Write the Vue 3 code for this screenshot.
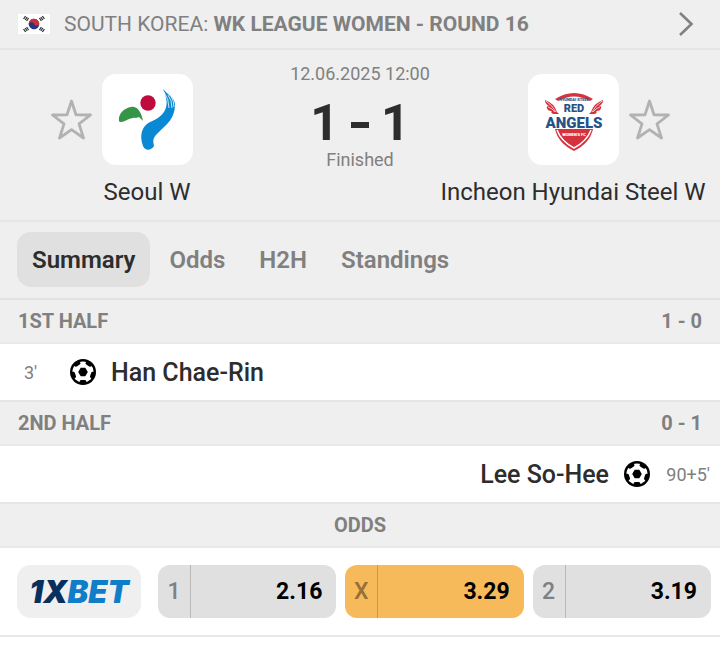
<script setup>
import { ref } from 'vue'

const tabs = ['Summary', 'Odds', 'H2H', 'Standings']
const activeTab = ref('Summary')
const favourites = ref({ home: false, away: false })

const halves = [
  { title: '1ST HALF', score: '1 - 0', side: 'home', minute: "3'", player: 'Han Chae-Rin' },
  { title: '2ND HALF', score: '0 - 1', side: 'away', minute: "90+5'", player: 'Lee So-Hee' },
]

const odds = [
  { label: '1', value: '2.16' },
  { label: 'X', value: '3.29', best: true },
  { label: '2', value: '3.19' },
]

const patchAngles = [0, 72, 144, 216, 288]
const starPath = 'M20.5 2 L25 15.8 L39.5 16 L28 24.8 L32.5 39 L20.5 30.6 L8.5 39 L13 24.8 L1.5 16 L16 15.8 Z'
</script>

<template>
  <main class="page">
    <a class="league" href="#league">
      <svg class="flag" viewBox="0 0 32 20" aria-hidden="true">
        <rect width="32" height="20" fill="#fff" />
        <g transform="rotate(-20 16 10)">
          <circle cx="16" cy="10" r="5.3" fill="#25367f" />
          <path d="M10.7 10a5.3 5.3 0 0 1 10.6 0a2.65 2.65 0 0 1-5.3 0a2.65 2.65 0 0 0-5.3 0Z" fill="#cb2f3c" />
        </g>
        <g stroke="#333" stroke-width="1.3" fill="none">
          <path d="M5.6 5l2-3M7.2 6l2-3M8.6 7l2-3" />
          <path d="M26.4 5l-2-3M24.8 6l-2-3M23.4 7l-2-3" />
          <path d="M5.6 15l2 3M7.2 14l2 3M8.6 13l2 3" />
          <path d="M26.4 15l-2 3M24.8 14l-2 3M23.4 13l-2 3" />
        </g>
      </svg>
      <span class="league-name">SOUTH KOREA: <b>WK LEAGUE WOMEN - ROUND 16</b></span>
      <svg class="chevron" viewBox="0 0 16 26" aria-hidden="true">
        <path d="M2 2 L13.5 13 L2 24" fill="none" stroke="#808080" stroke-width="2.6" />
      </svg>
    </a>

    <section class="match">
      <div class="team">
        <div class="crest-row">
          <button class="star" type="button" aria-label="Favourite Seoul W" :aria-pressed="favourites.home" @click="favourites.home = !favourites.home">
            <svg viewBox="0 0 41 41"><path :d="starPath" :fill="favourites.home ? '#b2b2b2' : 'none'" stroke="#b2b2b2" stroke-width="2.8" stroke-linejoin="round" /></svg>
          </button>
          <div class="crest">
            <svg viewBox="0 0 91 91" aria-hidden="true">
              <path d="M17 47C16 40 22 34 29 33C35 32 39 37 41 47L37 43L34 44C28 43 24 48 19 48Q17 48 17 47Z" fill="#369447" />
              <circle cx="46" cy="29" r="7.7" fill="#bd0c3d" />
              <path d="M61 15C66 21 72 23 73 30C73 45 64 51 58 57C50 64 51 66 52 72C49 77 43 77 41 72C37 61 40 52 48 48C59 44 67 36 64 24Q63 19 61 15Z" fill="#0989d3" />
              <path d="M62 18Q67 25 67 34M66 21Q70 26 70 34M69 22Q72 27 72 33" fill="none" stroke="#fff" stroke-width="0.8" />
            </svg>
          </div>
        </div>
        <h2 class="team-name">Seoul W</h2>
      </div>

      <div class="result">
        <time class="kickoff" datetime="2025-06-12T12:00">12.06.2025 12:00</time>
        <div class="score"><span>1</span><span class="dash"></span><span>1</span></div>
        <div class="status">Finished</div>
      </div>

      <div class="team away">
        <div class="crest-row">
          <div class="crest">
            <svg viewBox="0 0 91 91" aria-hidden="true">
              <path d="M27 25Q46 13 65 25L62 27Q46 18 30 27Z" fill="#d5323e" />
              <path d="M29 38Q26 29 17 26Q17 30 21 32Q17 32 20 36Q21 37 24 37Q22 38 25 40H31Z M63 38Q66 29 75 26Q75 30 71 32Q75 32 72 36Q71 37 68 37Q70 38 67 40H61Z" fill="#d5323e" />
              <path d="M18 27Q24 31 28 38M20 33Q24 34 27 38M74 27Q68 31 64 38M72 33Q68 34 65 38" fill="none" stroke="#fff" stroke-width="0.7" />
              <path d="M27 55H65Q62 69 46 77Q30 69 27 55Z" fill="#d5323e" />
              <path d="M29 56Q33 67 46 74Q59 67 63 56" fill="none" stroke="#fff" stroke-width="1.5" />
              <g text-anchor="middle" font-family="Roboto, sans-serif" font-weight="900">
                <text x="46" y="27" font-size="4" fill="#255386">HYUNDAI STEEL</text>
                <text x="46" y="38" font-size="11" fill="#255386">RED</text>
                <text x="46" y="54" font-size="15" fill="#255386" stroke="#fff" stroke-width="1.6" paint-order="stroke">ANGELS</text>
                <text x="46" y="62" font-size="4" fill="#fff">WOMEN'S FC</text>
              </g>
            </svg>
          </div>
          <button class="star" type="button" aria-label="Favourite Incheon Hyundai Steel W" :aria-pressed="favourites.away" @click="favourites.away = !favourites.away">
            <svg viewBox="0 0 41 41"><path :d="starPath" :fill="favourites.away ? '#b2b2b2' : 'none'" stroke="#b2b2b2" stroke-width="2.8" stroke-linejoin="round" /></svg>
          </button>
        </div>
        <h2 class="team-name">Incheon Hyundai Steel W</h2>
      </div>
    </section>

    <nav class="tabs">
      <button v-for="tab in tabs" :key="tab" type="button" class="tab" :class="{ active: tab === activeTab }" @click="activeTab = tab">{{ tab }}</button>
    </nav>

    <section v-for="half in halves" :key="half.title">
      <header class="bar"><span>{{ half.title }}</span><span>{{ half.score }}</span></header>
      <div class="event" :class="half.side">
        <span class="minute">{{ half.minute }}</span>
        <svg class="ball" viewBox="0 0 26 26" role="img" aria-label="Goal">
          <circle cx="13" cy="13" r="13" fill="#000" />
          <circle cx="13" cy="13" r="10.6" fill="#fff" />
          <path v-for="angle in patchAngles" :key="angle" :transform="`rotate(${angle} 13 13)`" d="M9 24.5L10 21.6L11.2 21H14.8L16 21.6L17 24.5Z" fill="#000" />
          <path d="M10.7 8.7H15.3L17.8 13L15.3 17.3H10.7L8.2 13Z" fill="#000" />
        </svg>
        <span class="player">{{ half.player }}</span>
      </div>
    </section>

    <section>
      <header class="bar centered"><span>ODDS</span></header>
      <div class="odds">
        <a class="bookmaker" href="#bookmaker" aria-label="1XBET"><span class="navy">1X</span><span>BET</span></a>
        <button v-for="odd in odds" :key="odd.label" type="button" class="odd" :class="{ best: odd.best }">
          <span class="odd-label">{{ odd.label }}</span>
          <span class="odd-value">{{ odd.value }}</span>
        </button>
      </div>
    </section>
  </main>
</template>

<style>
body {
  margin: 0;
  background: #fff;
}
</style>

<style scoped>
.page {
  font-family: Roboto, "Liberation Sans", sans-serif;
  color: #2d2d2d;
}

button {
  font: inherit;
  color: inherit;
  border: 0;
  padding: 0;
  background: none;
  cursor: pointer;
}

a {
  color: inherit;
  text-decoration: none;
}

svg {
  display: block;
}

.league {
  display: flex;
  align-items: center;
  height: 48px;
  padding: 0 26px 0 18px;
  border-bottom: 2px solid #e6e6e6;
  background: #efefef;
  color: #808080;
  font-size: 21px;
}

.flag {
  width: 32px;
  height: 20px;
  margin-right: 14px;
}

.league-name {
  flex: 1;
  white-space: nowrap;
}

.league-name b {
  font-weight: 700;
}

.chevron {
  width: 16px;
  height: 26px;
}

.match {
  display: grid;
  grid-template-columns: 1fr 132px 1fr;
  padding: 12px 0;
  border-bottom: 2px solid #e6e6e6;
  background: #efefef;
}

.team {
  padding-top: 12px;
}

.crest-row {
  display: grid;
  grid-template-columns: 1fr 91px 1fr;
  align-items: center;
  gap: 10px;
}

.crest {
  grid-column: 2;
  height: 91px;
  border-radius: 14px;
  background: #fff;
}

.star {
  justify-self: end;
  width: 41px;
  height: 41px;
}

.away .star {
  justify-self: start;
}

.team-name {
  margin: 12px 0 0;
  padding-bottom: 1px;
  font-size: 24px;
  line-height: 30px;
  font-weight: 400;
  text-align: center;
  white-space: nowrap;
}

.result {
  display: flex;
  flex-direction: column;
  align-items: center;
  color: #808080;
  font-size: 18px;
  line-height: 24px;
  white-space: nowrap;
}

.score {
  display: flex;
  align-items: center;
  gap: 12px;
  padding-top: 12px;
  color: #2d2d2d;
  font-size: 50px;
  line-height: 50px;
  font-weight: 700;
}

.dash {
  width: 18px;
  height: 6px;
  margin-top: 4px;
  background: #2d2d2d;
}

.tabs {
  display: flex;
  gap: 4px;
  padding: 10px 17px 11px;
  border-bottom: 2px solid #e2e2e2;
  background: #efefef;
}

.tab {
  height: 55px;
  padding: 0 15px;
  border-radius: 14px;
  color: #808080;
  font-size: 24px;
  font-weight: 600;
}

.tab.active {
  background: #e0e0e0;
  color: #2d2d2d;
}

.bar {
  display: flex;
  justify-content: space-between;
  padding: 0 18px;
  border-bottom: 2px solid #e9e9e9;
  background: #efefef;
  color: #808080;
  font-size: 20px;
  line-height: 42px;
  font-weight: 700;
}

.bar.centered {
  justify-content: center;
}

.event {
  display: flex;
  align-items: center;
  height: 56px;
  border-bottom: 2px solid #e6e6e6;
}

.event.away {
  flex-direction: row-reverse;
}

.minute {
  width: 46px;
  padding-left: 24px;
  color: #808080;
  font-size: 18px;
}

.away .minute {
  padding: 0 10px 0 0;
  text-align: right;
}

.ball {
  width: 26px;
  height: 26px;
}

.away .ball {
  margin-right: 14px;
}

.player {
  margin: 0 15px;
  font-size: 25px;
  font-weight: 500;
}

.odds {
  display: flex;
  gap: 9px;
  padding: 17px 9px 17px 17px;
  border-bottom: 2px solid #e8e8e8;
}

.bookmaker {
  display: flex;
  align-items: center;
  justify-content: center;
  width: 124px;
  margin-right: 8px;
  border-radius: 14px;
  background: #efefef;
  color: #107dc9;
  font-family: Inter, "Liberation Sans", sans-serif;
  font-size: 31px;
  font-weight: 900;
  font-style: italic;
}

.navy {
  color: #07305f;
}

.odd {
  display: flex;
  flex: 1;
  height: 53px;
  border-radius: 12px;
  background: #e0e0e0;
  font-size: 23px;
  line-height: 53px;
  font-weight: 700;
}

.odd-label {
  width: 32px;
  border-right: 1px solid #b8b8b8;
  color: #808080;
  font-weight: 500;
}

.odd-value {
  flex: 1;
  padding-right: 14px;
  color: #000;
  text-align: right;
}

.odd.best {
  background: #f6ba5b;
}

.best .odd-label {
  border-color: #c99850;
  color: #957037;
}
</style>
